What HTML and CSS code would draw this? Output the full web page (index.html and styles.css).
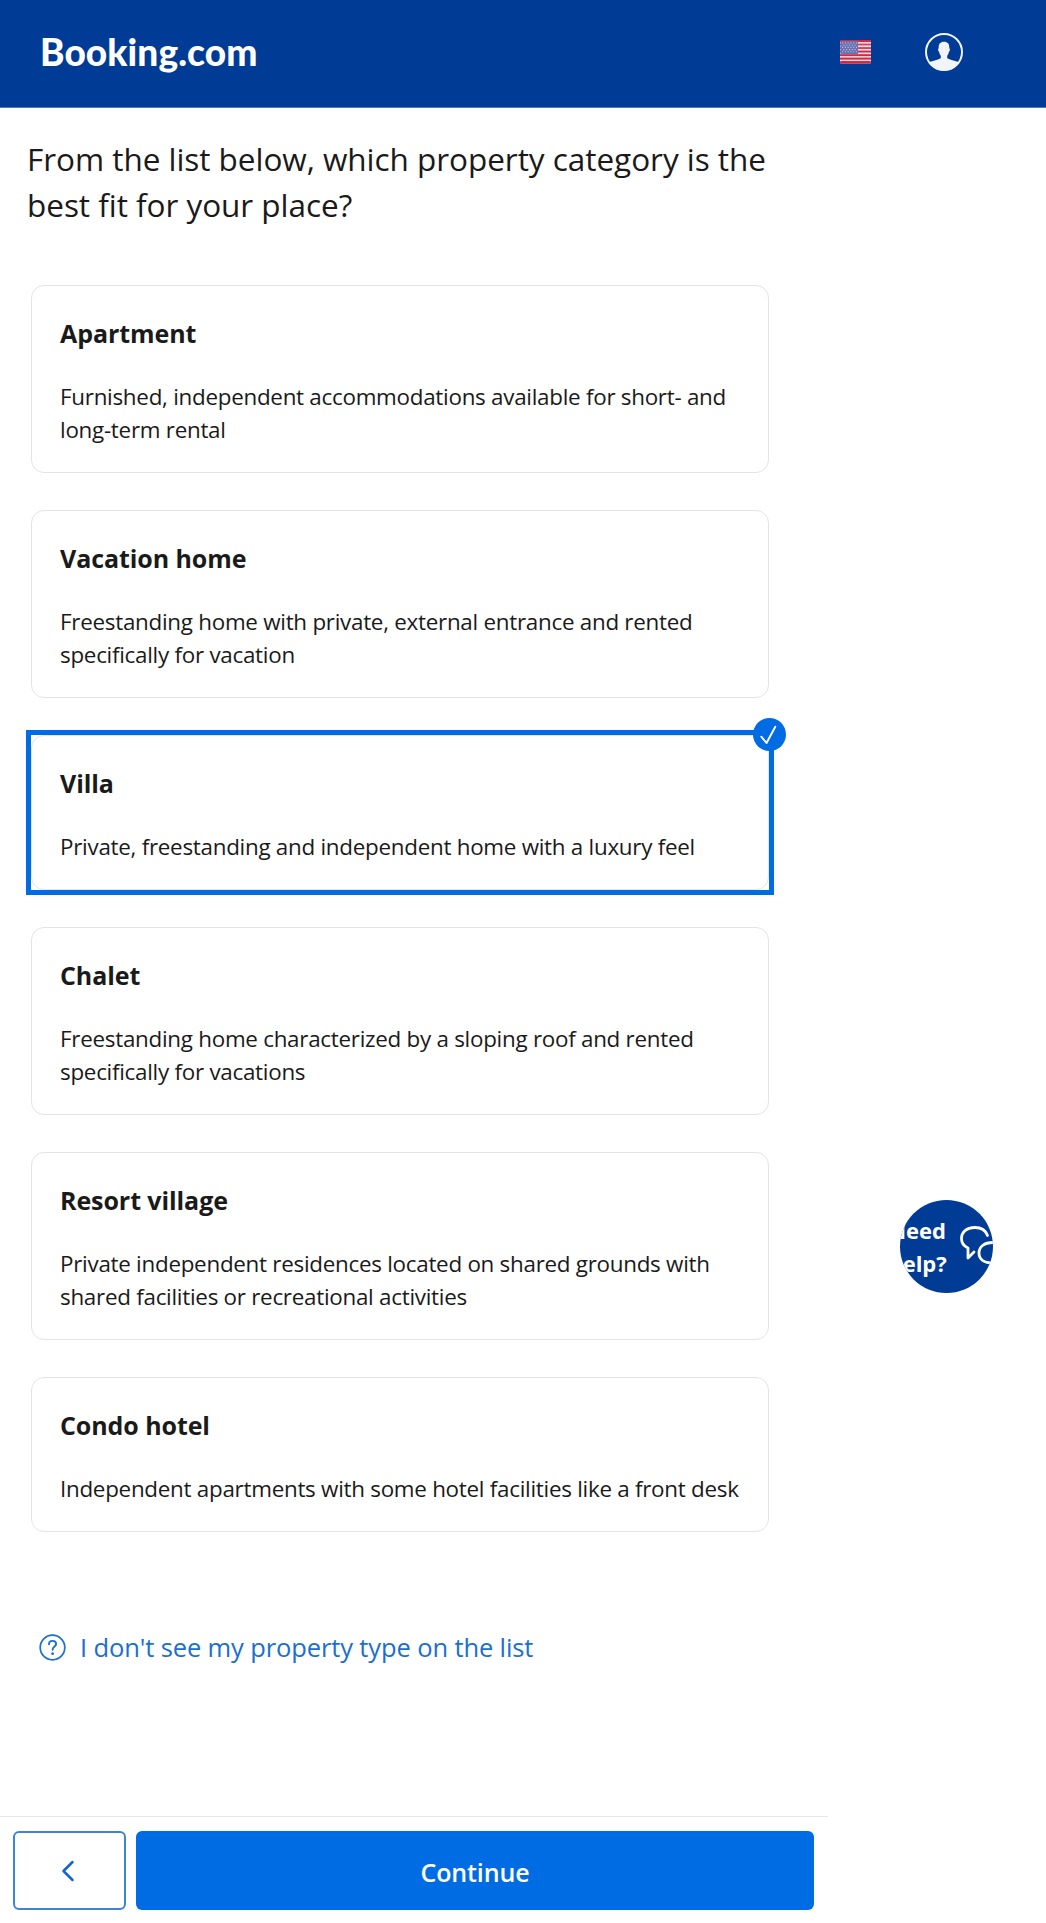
FILE: index.html
```html
<!DOCTYPE html>
<html lang="en">
<head>
<meta charset="utf-8">
<title>Booking.com</title>
<link rel="stylesheet" href="styles.css">
</head>
<body>
<header class="topbar">
  <div class="logo">Booking.com</div>
  <svg class="flag" width="31" height="24" viewBox="0 0 31 24" aria-label="English (US)">
    <rect width="31" height="23" y="0.4" rx="1" fill="#e9dfe9"/>
    <g fill="#d8273f"><rect y="0" width="31" height="2"/><rect y="3.6" width="31" height="1.8" opacity=".85"/><rect y="7.1" width="31" height="1.9" opacity=".85"/><rect y="10.6" width="31" height="1.9"/><rect y="14.2" width="31" height="1.9"/><rect y="17.6" width="31" height="2"/><rect y="21" width="31" height="2.4" rx="1"/></g>
    <rect x="0.5" y="1" width="17.5" height="13.2" fill="#6a70b0"/>
    <g stroke="#b9c0e2" stroke-width="1.1" stroke-dasharray="1.1 1.7"><path d="M2 3h15M3.4 5.2h14M2 7.4h15M3.4 9.6h14M2 11.8h15"/></g>
  </svg>
  <svg class="avatar" width="38" height="38" viewBox="0 0 38 38">
    <circle cx="19" cy="19" r="18" fill="none" stroke="#f1f4fa" stroke-width="2"/>
    <path fill="#f1f4fa" d="M19 8.800c3.600 0 5.600 2.200 5.300 6.200l.6 1.300c0 1.500-.5 2.300-1 2.500-.3 1.800-1 3.200-1.700 4v2.200c1 1.700 7 2.200 11.300 4.200C30 34.600 24.300 37.500 19 37.500S8 34.600 4.500 29.200c4.300-2 10.300-2.500 11.300-4.200v-2.200c-.7-.8-1.400-2.200-1.700-4-.5-.2-1-1-1-2.500l.6-1.300c-.3-4 1.700-6.200 5.300-6.200z"/>
  </svg>
</header>
<main class="content">
  <h1 class="question">From the list below, which property category is the<br>best fit for your place?</h1>
  <div class="options">
    <div class="option"><div class="card"><h2>Apartment</h2><p>Furnished, independent accommodations available for short- and<br>long-term rental</p></div></div>
    <div class="option"><div class="card"><h2>Vacation home</h2><p>Freestanding home with private, external entrance and rented<br>specifically for vacation</p></div></div>
    <div class="option selected">
      <div class="card"><h2>Villa</h2><p>Private, freestanding and independent home with a luxury feel</p></div>
      <svg class="check" width="33" height="33" viewBox="0 0 33 33"><circle cx="16.500" cy="16.500" r="16.500" fill="#006ce4"/><path d="M8.300 18.700l5.200 6.300 8.800-16.300" fill="none" stroke="#fff" stroke-width="1.900" stroke-linecap="round" stroke-linejoin="round"/></svg>
    </div>
    <div class="option"><div class="card"><h2>Chalet</h2><p>Freestanding home characterized by a sloping roof and rented<br>specifically for vacations</p></div></div>
    <div class="option"><div class="card"><h2>Resort village</h2><p>Private independent residences located on shared grounds with<br>shared facilities or recreational activities</p></div></div>
    <div class="option"><div class="card"><h2>Condo hotel</h2><p>Independent apartments with some hotel facilities like a front desk</p></div></div>
  </div>
  <a class="missing">
    <svg width="27" height="27" viewBox="0 0 27 27" fill="none" stroke="#1a6fd0" stroke-linecap="round"><circle cx="13.500" cy="13.500" r="12.300" stroke-width="1.700"/><path d="M10 10.200c0-2 1.500-3.300 3.600-3.300s3.500 1.300 3.500 3.100c0 2.600-3.500 2.600-3.500 5.800" stroke-width="1.900"/><circle cx="13.600" cy="19.700" r="1.400" fill="#1a6fd0" stroke="none"/></svg>
    <span>I don't see my property type on the list</span>
  </a>
</main>
<footer class="actions">
  <button class="back" aria-label="Back"><svg width="14" height="22" viewBox="0 0 14 22"><path d="M11.500 2L2.500 11l9 9" fill="none" stroke="#1466cf" stroke-width="2.500" stroke-linecap="round" stroke-linejoin="round"/></svg></button>
  <button class="continue">Continue</button>
</footer>
<div class="help">
  <span>Need<br>help?</span>
  <svg width="44" height="46" viewBox="0 0 44 46" fill="none" stroke="#fff" stroke-width="2.800" stroke-linecap="round" stroke-linejoin="round"><path d="M27.500 11.500C25.500 6 21.500 3.500 15 3.500 6 3.500 1.500 8.500 1.500 14.500c0 5 3 8 6.500 9.500v10l6-6"/><path d="M33 18.500c-9 0-14 4.500-14 10.500s5 10 14 10"/></svg>
</div>
</body>
</html>
```
FILE: styles.css
```css
* { box-sizing: border-box; }
body {
  margin: 0;
  height: 1923px;
  display: flex;
  flex-direction: column;
  background: #fff;
  color: #1a1a1a;
  font-family: "Open Sans", sans-serif;
}
.topbar {
  height: 108px;
  padding: 0 83px 4px 40px;
  display: flex;
  align-items: center;
  background: #003b95;
  border-bottom: 1px solid #5079b8;
}
.logo {
  flex: 1;
  color: #fff;
  font: 900 37px/44px Lato, sans-serif;
  letter-spacing: 0.1px;
}
.flag { margin-right: 54px; }
.content { flex: 1; padding: 28px 27px 0; }
.question {
  margin: 0;
  font-weight: 400;
  font-size: 31.5px;
  line-height: 46px;
  letter-spacing: -0.04px;
}
.options {
  width: 738px;
  margin: 57px 0 0 4px;
  display: grid;
  gap: 37px;
}
.option { position: relative; }
.selected { outline: 5px solid #006ce4; outline-offset: -0.5px; }
.card {
  padding: 29px 27px 26px 28px;
  border: 1px solid #e4e4e6;
  border-radius: 13px;
}
.card h2 {
  margin: 0 0 29px;
  font-size: 25px;
  font-weight: 700;
  line-height: 36px;
  letter-spacing: -0.08px;
}
.card p {
  margin: 0;
  font-size: 22.4px;
  line-height: 33px;
  letter-spacing: -0.27px;
  white-space: nowrap;
}
.check { position: absolute; top: -17px; right: -17px; }
.missing {
  margin: 95px 0 0 12px;
  display: flex;
  align-items: center;
  gap: 14px;
  color: #1a6fd0;
  font-size: 25.5px;
  line-height: 40px;
  letter-spacing: -0.12px;
}
.actions {
  width: 828px;
  height: 107px;
  padding: 14px 14px 13px 13px;
  display: flex;
  gap: 10px;
  border-top: 1px solid #e7e7e7;
}
.actions button { border-radius: 6px; font-family: inherit; }
.back {
  width: 113px;
  padding: 0 4px 0 0;
  display: flex;
  align-items: center;
  justify-content: center;
  background: #fff;
  border: 2px solid #3d84d8;
}
.continue {
  flex: 1;
  padding: 2px 0 0;
  border: 0;
  background: #006ce4;
  color: #fff;
  font-size: 25px;
  font-weight: 600;
  letter-spacing: -0.1px;
}
.help {
  position: absolute;
  left: 900px;
  top: 1200px;
  width: 93px;
  height: 93px;
  border-radius: 50%;
  overflow: hidden;
  display: flex;
  align-items: center;
  justify-content: center;
  gap: 13px;
  padding-right: 1px;
  background: #003b95;
  color: #fff;
  font-size: 22px;
  font-weight: 700;
  line-height: 33px;
}
.help span, .help svg { flex: none; }
```
